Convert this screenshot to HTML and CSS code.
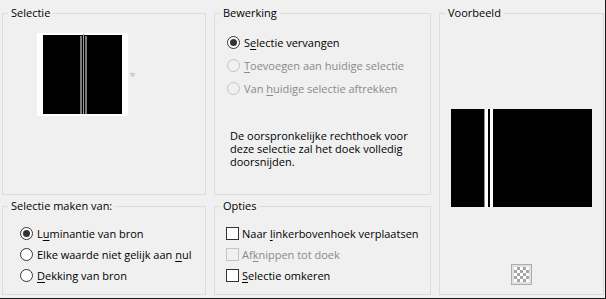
FILE: index.html
```html
<!DOCTYPE html>
<html lang="nl">
<head>
    <meta charset="UTF-8">
    <title>Selectie uit masker</title>
    <link rel="stylesheet" href="styles.css">
</head>
<body>
    <div class="dialog">
        <fieldset class="group group-selection">
            <legend>Selectie</legend>
            <div class="thumb-row">
                <svg class="thumb" width="91" height="83" viewBox="0 0 91 83">
                    <rect width="91" height="83" fill="#fff"/>
                    <rect x="6" y="2" width="79" height="79" fill="#000"/>
                    <rect x="43" y="3" width="2" height="78" fill="#7a7a7a"/>
                    <rect x="46" y="1" width="1" height="80" fill="#9c9c9c"/>
                    <rect x="48" y="3" width="2" height="78" fill="#7a7a7a"/>
                </svg>
                <svg class="drop-arrow" width="5" height="4" viewBox="0 0 5 4">
                    <rect width="5" height="1" fill="#c4c4c4"/>
                    <polygon points="0,1.5 5,1.5 2.5,4" fill="#c4c4c4"/>
                </svg>
            </div>
        </fieldset>

        <fieldset class="group group-edit">
            <legend>Bewerking</legend>
            <div class="choices">
                <label class="radio checked"><span class="mark"></span><span>S<u>e</u>lectie vervangen</span></label>
                <label class="radio disabled"><span class="mark"></span><span><u>T</u>oevoegen aan huidige selectie</span></label>
                <label class="radio disabled"><span class="mark"></span><span>Van <u>h</u>uidige selectie aftrekken</span></label>
            </div>
            <p class="note">De oorspronkelijke rechthoek voor<br>deze selectie zal het doek volledig<br>doorsnijden.</p>
        </fieldset>

        <fieldset class="group group-preview">
            <legend>Voorbeeld</legend>
            <svg class="preview" width="141" height="98" viewBox="0 0 141 98">
                <rect width="141" height="98" fill="#000"/>
                <rect x="33" y="0" width="1" height="98" fill="#8c8c8c"/>
                <rect x="34" y="0" width="3" height="98" fill="#fff"/>
                <rect x="39" y="0" width="3" height="98" fill="#fff"/>
            </svg>
            <button class="bg-button" type="button">
                <span class="checker"></span>
            </button>
        </fieldset>

        <fieldset class="group group-source">
            <legend>Selectie maken van:</legend>
            <div class="choices compact">
                <label class="radio checked"><span class="mark"></span><span>L<u>u</u>minantie van bron</span></label>
                <label class="radio"><span class="mark"></span><span>Elke waarde niet gelijk aan <u>n</u>ul</span></label>
                <label class="radio"><span class="mark"></span><span><u>D</u>ekking van bron</span></label>
            </div>
        </fieldset>

        <fieldset class="group group-options">
            <legend>Opties</legend>
            <div class="choices compact">
                <label class="check"><span class="box"></span><span>Naar <u>l</u>inkerbovenhoek verplaatsen</span></label>
                <label class="check disabled"><span class="box"></span><span>Af<u>k</u>nippen tot doek</span></label>
                <label class="check"><span class="box"></span><span><u>S</u>electie omkeren</span></label>
            </div>
        </fieldset>
    </div>
</body>
</html>
```

FILE: styles.css
```css
body {
    margin: 0;
    background-color: #f0f0f0;
    font-family: "Open Sans", "Noto Sans", sans-serif;
    font-size: 11px;
    color: #000;
}
.dialog {
    box-sizing: border-box;
    width: 606px;
    height: 299px;
    padding: 5px 0 0 2px;
    border-right: 1px solid #1a1a1a;
    border-bottom: 1px solid #1a1a1a;
    display: grid;
    grid-template-columns: 204px 217px 165px;
    grid-template-rows: 190px 97px;
    column-gap: 8px;
    row-gap: 3px;
}
.group {
    margin: 0;
    padding: 0;
    min-width: 0;
    border: 1px solid #dcdcdc;
}
.group legend {
    margin-left: 5px;
    padding: 0 3px;
    line-height: 16px;
}
.group-preview {
    grid-column: 3;
    grid-row: 1 / span 2;
    display: flex;
    flex-direction: column;
    align-items: center;
}

/* Selectie */
.thumb-row {
    display: flex;
    align-items: flex-start;
    padding: 12px 0 0 34px;
}
.thumb {
    display: block;
}
.drop-arrow {
    display: block;
    margin: 40px 0 0 2px;
}

/* radio / checkbox lists */
.choices {
    display: flex;
    flex-direction: column;
    padding: 10px 0 0 12px;
}
.radio, .check {
    display: flex;
    align-items: center;
    height: 23px;
    white-space: nowrap;
}
.choices.compact {
    padding-top: 9px;
}
.choices.compact .radio, .choices.compact .check {
    height: 21px;
}
.group-source .choices {
    padding-left: 17px;
}
.group-options .choices {
    padding-left: 11px;
}
.mark {
    box-sizing: border-box;
    width: 13px;
    height: 13px;
    margin-right: 4px;
    border: 1px solid #333;
    border-radius: 50%;
    background-color: #fff;
    display: flex;
    align-items: center;
    justify-content: center;
}
.radio.checked .mark::after {
    content: "";
    width: 7px;
    height: 7px;
    border-radius: 50%;
    background-color: #333;
}
.box {
    box-sizing: border-box;
    width: 13px;
    height: 13px;
    margin-right: 3px;
    border: 1px solid #333;
    background-color: #fff;
}
.disabled {
    color: #8a8a8a;
}
.disabled .mark, .disabled .box {
    border-color: #c4c4c4;
    background-color: #f0f0f0;
}
u {
    text-decoration-thickness: 1px;
    text-underline-offset: 2px;
}

.note {
    margin: 29px 0 0 15px;
    line-height: 13px;
}

/* Voorbeeld */
.preview {
    display: block;
    margin-top: 88px;
}
.bg-button {
    box-sizing: border-box;
    width: 21px;
    height: 21px;
    margin-top: 57px;
    padding: 0;
    border: 1px solid #adadad;
    background-color: #e1e1e1;
    display: flex;
    align-items: center;
    justify-content: center;
}
.checker {
    width: 15px;
    height: 15px;
    background-color: #fff;
    background-image:
        linear-gradient(45deg, #a6a6a6 25%, transparent 25%, transparent 75%, #a6a6a6 75%),
        linear-gradient(45deg, #a6a6a6 25%, transparent 25%, transparent 75%, #a6a6a6 75%);
    background-size: 6px 6px;
    background-position: 0 0, 3px 3px;
}
```
